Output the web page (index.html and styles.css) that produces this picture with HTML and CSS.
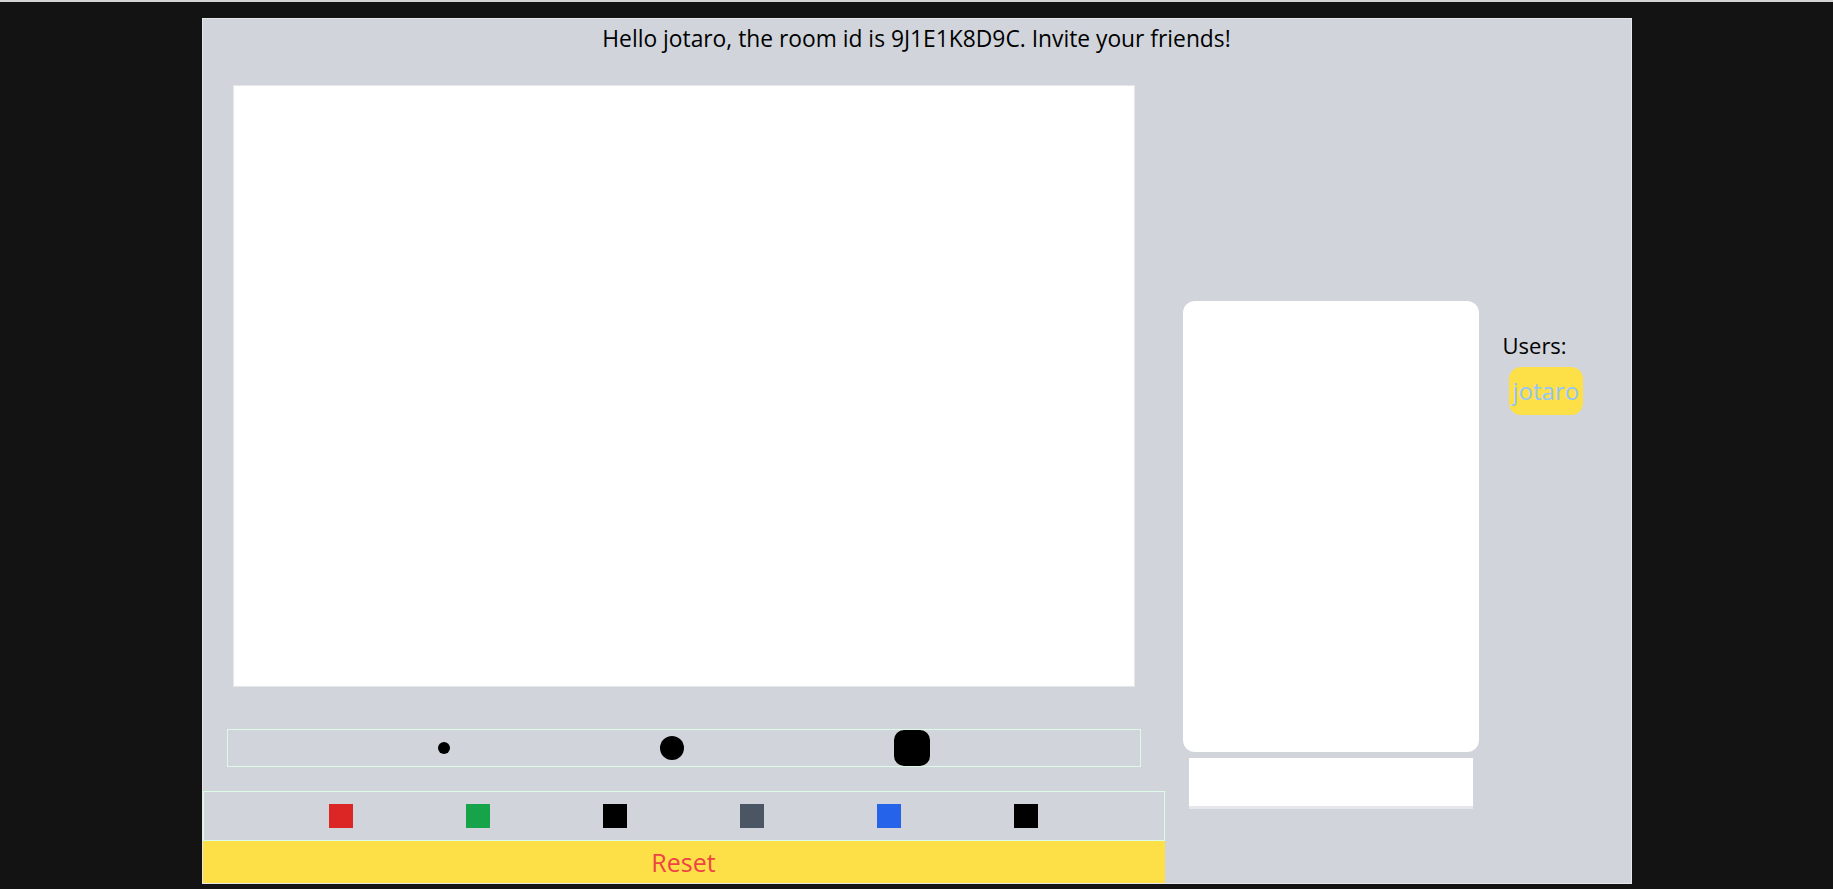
FILE: index.html
```html
<!DOCTYPE html>
<html>
<head>
<meta charset="utf-8">
<title>Room</title>
<link rel="stylesheet" href="styles.css">
</head>
<body>
<div class="topline"></div>
<main class="panel">
  <h1 class="greeting">Hello jotaro, the room id is 9J1E1K8D9C. Invite your friends!</h1>
  <div class="row">
    <section class="board">
      <div class="canvas"></div>
      <div class="sizes">
        <span class="size size-s"></span>
        <span class="size size-m"></span>
        <span class="size size-l"></span>
      </div>
      <div class="colors">
        <span class="swatch red"></span>
        <span class="swatch green"></span>
        <span class="swatch black"></span>
        <span class="swatch gray"></span>
        <span class="swatch blue"></span>
        <span class="swatch black"></span>
      </div>
      <button class="reset">Reset</button>
    </section>
    <section class="chat">
      <div class="messages"></div>
      <div class="chat-input"></div>
    </section>
    <aside class="users">
      <p class="users-title">Users:</p>
      <span class="user-chip">jotaro</span>
    </aside>
  </div>
</main>
</body>
</html>
```
FILE: styles.css
```css
* { box-sizing: border-box; }
html, body { margin: 0; padding: 0; }
body {
  background: #131313;
  font-family: "Open Sans", "Noto Sans", sans-serif;
  height: 889px;
  overflow: hidden;
}
.topline {
  height: 2px;
  background: #d4d4d4;
  margin-bottom: 16px;
}
.panel {
  width: 1430px;
  height: 866px;
  margin: 0 auto;
  background: #d1d5db;
  border: 1px solid #e5e7eb;
}
.greeting {
  margin: 0;
  height: 66px;
  padding-top: 4px;
  font-size: 22.8px;
  line-height: 32px;
  font-weight: 400;
  text-align: center;
  color: #000;
}
.row {
  display: flex;
  align-items: flex-start;
}
.board {
  width: 962px;
  display: flex;
  flex-direction: column;
  align-items: center;
}
.canvas {
  width: 902px;
  height: 602px;
  background: #fff;
  border: 1px solid #e5e7eb;
}
.sizes {
  margin-top: 42px;
  width: 914px;
  height: 38px;
  border: 1px solid #dcfce7;
  display: flex;
  align-items: center;
  justify-content: space-evenly;
}
.size { display: block; background: #000; }
.size-s { width: 12px; height: 12px; border-radius: 50%; }
.size-m { width: 24px; height: 24px; border-radius: 50%; }
.size-l { width: 36px; height: 36px; border-radius: 10px; }
.colors {
  margin-top: 24px;
  width: 962px;
  height: 50px;
  border: 1px solid #dcfce7;
  display: flex;
  align-items: center;
  justify-content: center;
  gap: 113px;
}
.swatch { display: block; width: 24px; height: 24px; }
.red { background: #dc2626; }
.green { background: #16a34a; }
.black { background: #000; }
.gray { background: #4b5563; }
.blue { background: #2563eb; }
.reset {
  width: 962px;
  height: 42px;
  border: 0;
  padding: 0;
  background: #fde047;
  color: #ef4444;
  font-family: inherit;
  font-size: 25px;
  line-height: 42px;
}
.chat {
  margin-left: 18px;
  margin-top: 216px;
  width: 296px;
  display: flex;
  flex-direction: column;
  align-items: center;
}
.messages {
  width: 296px;
  height: 451px;
  background: #fff;
  border-radius: 12px;
}
.chat-input {
  margin-top: 6px;
  width: 284px;
  height: 51px;
  background: #fff;
  border-bottom: 3px solid #e5e7eb;
}
.users {
  margin-left: 24px;
  margin-top: 244px;
  display: flex;
  flex-direction: column;
  align-items: flex-start;
}
.users-title {
  margin: 0;
  font-size: 22px;
  line-height: 32px;
}
.user-chip {
  margin-top: 6px;
  margin-left: 6px;
  padding: 8px 4px;
  background: #fde047;
  color: #93c5fd;
  border-radius: 12px;
  font-size: 24px;
  line-height: 32px;
}
```
